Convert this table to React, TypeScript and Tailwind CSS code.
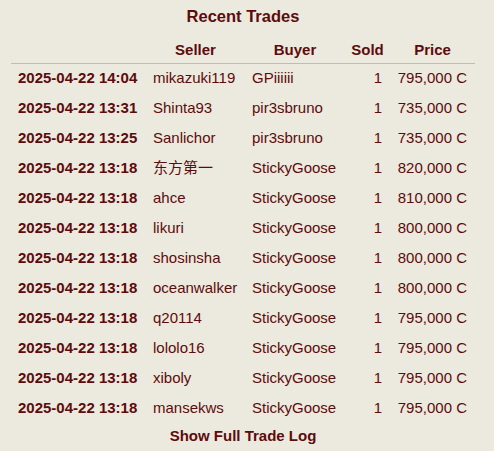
const trades = [
  { time: "2025-04-22 14:04", seller: "mikazuki119", buyer: "GPiiiiii", sold: 1, price: "795,000 C" },
  { time: "2025-04-22 13:31", seller: "Shinta93", buyer: "pir3sbruno", sold: 1, price: "735,000 C" },
  { time: "2025-04-22 13:25", seller: "Sanlichor", buyer: "pir3sbruno", sold: 1, price: "735,000 C" },
  { time: "2025-04-22 13:18", seller: "东方第一", buyer: "StickyGoose", sold: 1, price: "820,000 C" },
  { time: "2025-04-22 13:18", seller: "ahce", buyer: "StickyGoose", sold: 1, price: "810,000 C" },
  { time: "2025-04-22 13:18", seller: "likuri", buyer: "StickyGoose", sold: 1, price: "800,000 C" },
  { time: "2025-04-22 13:18", seller: "shosinsha", buyer: "StickyGoose", sold: 1, price: "800,000 C" },
  { time: "2025-04-22 13:18", seller: "oceanwalker", buyer: "StickyGoose", sold: 1, price: "800,000 C" },
  { time: "2025-04-22 13:18", seller: "q20114", buyer: "StickyGoose", sold: 1, price: "795,000 C" },
  { time: "2025-04-22 13:18", seller: "lololo16", buyer: "StickyGoose", sold: 1, price: "795,000 C" },
  { time: "2025-04-22 13:18", seller: "xiboly", buyer: "StickyGoose", sold: 1, price: "795,000 C" },
  { time: "2025-04-22 13:18", seller: "mansekws", buyer: "StickyGoose", sold: 1, price: "795,000 C" },
];

export default function App() {
  return (
    <div
      className="min-h-[451px] w-[494px] bg-[#ece9df] pl-[11px] text-[#5c0c0c]"
      style={{ fontFamily: '"Liberation Sans", Arial, "Noto Sans CJK SC", sans-serif' }}
    >
      <div className="w-[464px]">
        <h3 className="pt-[6px] pb-[9px] text-center text-[16.5px] font-bold leading-[21px]">Recent Trades</h3>
        <table className="w-[464px] table-fixed border-collapse text-[15px]">
          <colgroup>
            <col className="w-[135px]" />
            <col className="w-[99px]" />
            <col className="w-[100px]" />
            <col className="w-[45px]" />
            <col className="w-[85px]" />
          </colgroup>
          <thead>
            <tr className="h-[27px] border-b border-[#cbb9ad] font-bold">
              <th className="pt-[1px]"></th>
              <th className="pt-[1px] text-center">Seller</th>
              <th className="pt-[1px] text-center">Buyer</th>
              <th className="pt-[1px] text-center">Sold</th>
              <th className="pt-[1px] text-center">Price</th>
            </tr>
          </thead>
          <tbody>
            {trades.map((t, i) => (
              <tr key={i} className="h-[30px]">
                <td className="pl-[7px] font-bold whitespace-nowrap">{t.time}</td>
                <td className="pl-[7px] whitespace-nowrap">{t.seller}</td>
                <td className="pl-[7px] whitespace-nowrap">{t.buyer}</td>
                <td className="pr-[8px] text-right">{t.sold}</td>
                <td className="pr-[8px] text-right whitespace-nowrap">{t.price}</td>
              </tr>
            ))}
          </tbody>
        </table>
        <div className="pt-[4px] text-center text-[15px] font-bold leading-[18px]">Show Full Trade Log</div>
      </div>
    </div>
  );
}
